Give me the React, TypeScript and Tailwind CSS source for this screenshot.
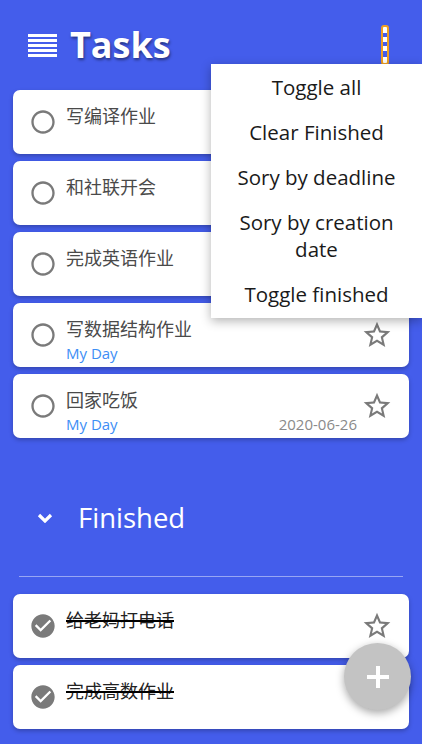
import React from "react"

const font = { fontFamily: '"Open Sans", "Noto Sans CJK SC", sans-serif' }

type Task = { title: string; myDay?: boolean; date?: string; done?: boolean }

const todo: Task[] = [
  { title: "写编译作业" },
  { title: "和社联开会" },
  { title: "完成英语作业" },
  { title: "写数据结构作业", myDay: true },
  { title: "回家吃饭", myDay: true, date: "2020-06-26" },
]

const finished: Task[] = [
  { title: "给老妈打电话", done: true },
  { title: "完成高数作业", done: true },
]

const menuItems = ["Toggle all", "Clear Finished", "Sory by deadline", "Sory by creation date", "Toggle finished"]

function CircleIcon() {
  return (
    <svg viewBox="0 0 24 24" className="h-[28px] w-[28px]" fill="#7a7a7a">
      <path d="M12 2C6.48 2 2 6.48 2 12s4.48 10 10 10 10-4.48 10-10S17.52 2 12 2zm0 18c-4.42 0-8-3.58-8-8s3.58-8 8-8 8 3.58 8 8-3.58 8-8 8z" />
    </svg>
  )
}

function CheckIcon() {
  return (
    <svg viewBox="0 0 24 24" className="h-[28px] w-[28px]" fill="#7a7a7a">
      <path d="M12 2C6.48 2 2 6.48 2 12s4.48 10 10 10 10-4.48 10-10S17.52 2 12 2zm-2 15l-5-5 1.41-1.41L10 14.17l7.59-7.59L19 8l-9 9z" />
    </svg>
  )
}

function StarIcon() {
  return (
    <svg viewBox="0 0 24 24" className="h-[32px] w-[32px]" fill="#7a7a7a">
      <path d="M22 9.24l-7.19-.62L12 2 9.19 8.63 2 9.24l5.46 4.73L5.82 21 12 17.27 18.18 21l-1.63-7.03L22 9.24zM12 15.4l-3.76 2.27 1-4.28-3.32-2.88 4.38-.38L12 6.1l1.71 4.04 4.38.38-3.32 2.88 1 4.28L12 15.4z" />
    </svg>
  )
}

function TaskCard({ task }: { task: Task }) {
  return (
    <div className="flex h-[64px] items-start rounded-[7px] bg-white pl-[16px] pr-[16px] shadow-[0_2px_4px_rgba(0,0,0,0.25)]">
      <div className="shrink-0 self-center">{task.done ? <CheckIcon /> : <CircleIcon />}</div>
      <div className="ml-[9px] flex min-w-0 flex-1 flex-col pt-[14px]">
        <div className="text-[18px] leading-[24px]">
          {task.done ? (
            <span className="text-[#222] line-through decoration-black decoration-[1.5px]">{task.title}</span>
          ) : (
            <span className="text-[#4a4a4a]">{task.title}</span>
          )}
        </div>
        {(task.myDay || task.date) && (
          <div className="mt-[2px] flex items-center justify-between pr-[4px] text-[15px] leading-[20px]">
            <span className="text-[#3d8ef5]">{task.myDay ? "My Day" : ""}</span>
            {task.date && <span className="text-[15px] text-[#8a8a8a]">{task.date}</span>}
          </div>
        )}
      </div>
      <div className="self-center">
        <StarIcon />
      </div>
    </div>
  )
}

export default function App() {
  return (
    <div className="relative min-h-[744px] w-full overflow-hidden bg-[#445deb] pb-[40px]" style={font}>
      {/* HEADER */}
      <div className="flex h-[90px] items-center justify-between pl-[28px] pr-[33px]">
        <div className="flex items-center gap-[13px]">
          <div className="flex w-[29px] flex-col gap-[2px]">
            <div className="h-[3px] bg-white" />
            <div className="h-[3px] bg-white" />
            <div className="h-[3px] bg-white" />
            <div className="h-[3px] bg-white" />
            <div className="h-[3px] bg-white" />
          </div>
          <h1 className="text-[36px] font-bold leading-none text-white [text-shadow:1px_2px_3px_rgba(0,0,0,0.45)]">
            Tasks
          </h1>
        </div>
        <button className="flex h-[40px] w-[8px] flex-col items-center justify-around rounded-[3px] border-2 border-[#f0a020] bg-white py-[3px]">
          <span className="h-[4px] w-[4px] bg-[#445deb]" />
          <span className="h-[4px] w-[4px] bg-[#445deb]" />
          <span className="h-[6px] w-[4px] bg-[#445deb]" />
        </button>
      </div>

      {/* MENU */}
      <div className="absolute right-0 top-[64px] z-10 w-[211px] bg-white py-[1px] shadow-[0_3px_10px_rgba(0,0,0,0.3)]">
        {menuItems.map((item) => (
          <div key={item} className="px-[14px] py-[9px] text-center text-[20.5px] leading-[27px] text-[#1a1a1a]">
            {item}
          </div>
        ))}
      </div>

      {/* TODO LIST */}
      <div className="flex flex-col gap-[7px] px-[13px]">
        {todo.map((t) => (
          <TaskCard key={t.title} task={t} />
        ))}
      </div>

      {/* FINISHED */}
      <div className="mt-[50px] flex h-[60px] items-center gap-[25px] pl-[37px]">
        <svg viewBox="0 0 16 10" className="h-[10px] w-[16px]" fill="none" stroke="white" strokeWidth="3.2">
          <path d="M2 2l6 6 6-6" />
        </svg>
        <span className="text-[27.5px] text-white">Finished</span>
      </div>
      <div className="mx-[19px] mt-[28px] h-px bg-white/45" />
      <div className="mt-[17px] flex flex-col gap-[7px] px-[13px]">
        {finished.map((t) => (
          <TaskCard key={t.title} task={t} />
        ))}
      </div>

      {/* FAB */}
      <button className="fixed bottom-[34px] right-[11px] z-20 flex h-[67px] w-[67px] items-center justify-center rounded-full bg-[#c3c3c3] shadow-[0_3px_8px_rgba(0,0,0,0.35)]">
        <svg viewBox="0 0 22 22" className="h-[22px] w-[22px]" fill="white">
          <rect x="9" y="0" width="4" height="22" />
          <rect x="0" y="9" width="22" height="4" />
        </svg>
      </button>
    </div>
  )
}
